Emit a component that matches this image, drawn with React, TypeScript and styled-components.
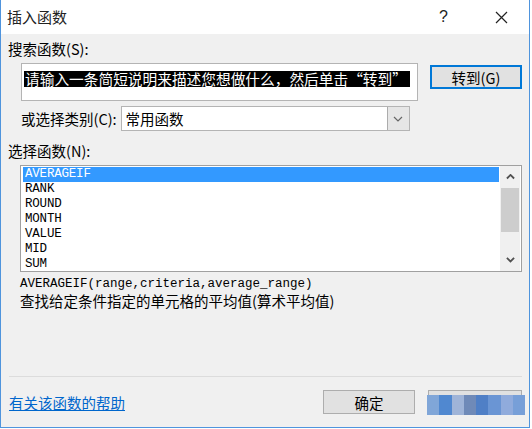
import React from "react";
import styled, { createGlobalStyle } from "styled-components";

const Global = createGlobalStyle`
  html, body { margin: 0; padding: 0; background: #ffffff; }
  body { font-family: "Noto Sans CJK SC", "Noto Sans", sans-serif; }
  * { box-sizing: border-box; }
`;

const CJK = `"Noto Sans CJK SC", "Noto Sans", sans-serif`;
const MONO = `"Liberation Mono", "DejaVu Sans Mono", monospace`;

const Dialog = styled.div`
  width: 530px;
  height: 428px;
  border: 1px solid #4f94dd;
  border-top: none;
  display: flex;
  flex-direction: column;
  background: #f0f0f0;
`;

const TitleBar = styled.div`
  height: 34px;
  background: #ffffff;
  display: flex;
  align-items: center;
  padding-left: 6px;
  padding-right: 21px;
`;

const Title = styled.div`
  font-family: ${CJK};
  font-size: 15px;
  line-height: 20px;
  color: #222;
  flex: 1;
`;

const HelpMark = styled.div`
  font-family: "Liberation Sans", sans-serif;
  font-size: 16px;
  color: #222;
  width: 12px;
  margin-right: 44px;
`;

const Content = styled.div`
  flex: 1;
  display: flex;
  flex-direction: column;
  padding: 6px 7px 0 7px;
`;

const Label = styled.div`
  font-family: ${CJK};
  font-size: 14.5px;
  line-height: 17px;
  color: #000;
  white-space: nowrap;
`;

const SearchRow = styled.div`
  display: flex;
  align-items: flex-start;
  margin-top: 6px;
  padding-left: 13px;
  gap: 12px;
`;

const SearchBox = styled.div`
  width: 397px;
  height: 38px;
  background: #fff;
  border: 1px solid #b4b4b4;
  padding: 2px 2px;
`;

const Selected = styled.span`
  display: inline-block;
  background: #000;
  color: #fff;
  font-family: ${CJK};
  font-size: 14.7px;
  line-height: 16px;
  white-space: nowrap;
  padding: 0 3px 0 1px;
`;

const Button = styled.div<{ $primary?: boolean; $w: number }>`
  width: ${(p) => p.$w}px;
  height: 24px;
  background: #e1e1e1;
  border: ${(p) => (p.$primary ? "2px solid #0078d7" : "1px solid #adadad")};
  display: flex;
  align-items: center;
  justify-content: center;
  font-family: ${CJK};
  font-size: 14.5px;
  color: #000;
  position: relative;
`;

const GoButton = styled(Button)`
  margin-top: 2px;
`;

const CategoryRow = styled.div`
  display: flex;
  align-items: center;
  margin-top: 5px;
  padding-left: 13px;
  gap: 4px;
`;

const Select = styled.div`
  width: 289px;
  height: 25px;
  background: #fff;
  border: 1px solid #b4b4b4;
  display: flex;
  align-items: center;
`;

const SelectText = styled.div`
  flex: 1;
  padding-left: 4px;
  font-family: ${CJK};
  font-size: 14.5px;
  line-height: 17px;
  color: #000;
`;

const SelectButton = styled.div`
  width: 22px;
  height: 23px;
  background: #e6e6e6;
  border-left: 1px solid #acacac;
  display: flex;
  align-items: center;
  justify-content: center;
`;

const ListLabel = styled(Label)`
  margin-top: 11px;
`;

const ListBox = styled.div`
  margin-top: 6px;
  margin-left: 12px;
  width: 502px;
  height: 107px;
  background: #fff;
  border: 1px solid #a0a0a0;
  display: flex;
  padding: 0 1px 0 2px;
  overflow: hidden;
`;

const Items = styled.div`
  flex: 1;
  display: flex;
  flex-direction: column;
  padding-top: 1px;
`;

const Item = styled.div<{ $sel?: boolean }>`
  flex: 0 0 15px;
  line-height: 15px;
  padding-left: 2px;
  font-family: ${MONO};
  font-size: 12.5px;
  letter-spacing: -0.2px;
  background: ${(p) => (p.$sel ? "#3399ff" : "transparent")};
  color: ${(p) => (p.$sel ? "#fff" : "#000")};
  margin-right: 1px;
`;

const ScrollBar = styled.div`
  width: 20px;
  background: #f0f0f0;
  display: flex;
  flex-direction: column;
  align-items: center;
`;

const Arrow = styled.div`
  flex: 0 0 22px;
  width: 20px;
  display: flex;
  align-items: center;
  justify-content: center;
`;

const Thumb = styled.div`
  width: 18px;
  height: 44px;
  background: #cdcdcd;
`;

const Track = styled.div`
  flex: 1;
`;

const Syntax = styled.div`
  margin-top: 5px;
  margin-left: 12px;
  font-family: ${MONO};
  font-size: 12.5px;
  line-height: 15px;
  color: #000;
`;

const Desc = styled(Label)`
  margin-left: 12px;
`;

const Spacer = styled.div`
  flex: 1;
`;

const Separator = styled.div`
  height: 1px;
  background: #dcdcdc;
  margin: 0 0 0 1px;
`;

const Footer = styled.div`
  height: 50px;
  display: flex;
  align-items: center;
  padding-left: 1px;
  gap: 13px;
`;

const HelpLink = styled.a`
  font-family: ${CJK};
  font-size: 14.5px;
  color: #0066cc;
  text-decoration: underline;
  flex: 1;
`;

const Mosaic = styled.div`
  position: absolute;
  left: -2px;
  right: -4px;
  top: 4px;
  bottom: -2px;
  display: flex;
`;

const Tile = styled.div<{ $c: string }>`
  flex: 1;
  background: ${(p) => p.$c};
`;

const mosaicColors = ["#80a6d8", "#5088d0", "#9fb4d8", "#6f8ab8", "#4f7fc6", "#6a95d4", "#90abdc", "#779fd8"];

const Chevron = ({ w = 10, color = "#555", up = false, sw = 1.4 }: { w?: number; color?: string; up?: boolean; sw?: number }) => (
  <svg width={w} height={w * 0.6} viewBox="0 0 10 6">
    <polyline
      points={up ? "1,5 5,1 9,5" : "1,1 5,5 9,1"}
      fill="none"
      stroke={color}
      strokeWidth={sw}
    />
  </svg>
);

const items = ["AVERAGEIF", "RANK", "ROUND", "MONTH", "VALUE", "MID", "SUM"];

export default function App() {
  return (
    <>
      <Global />
      <Dialog>
        <TitleBar>
          <Title>插入函数</Title>
          <HelpMark>?</HelpMark>
          <svg width="13" height="13" viewBox="0 0 13 13">
            <path d="M1 1 L12 12 M12 1 L1 12" stroke="#222" strokeWidth="1.2" />
          </svg>
        </TitleBar>
        <Content>
          <Label>搜索函数(S):</Label>
          <SearchRow>
            <SearchBox>
              <Selected>请输入一条简短说明来描述您想做什么，然后单击“转到”</Selected>
            </SearchBox>
            <GoButton $primary $w={92}>转到(G)</GoButton>
          </SearchRow>
          <CategoryRow>
            <Label>或选择类别(C):</Label>
            <Select>
              <SelectText>常用函数</SelectText>
              <SelectButton>
                <Chevron w={10} color="#666" sw={1.2} />
              </SelectButton>
            </Select>
          </CategoryRow>
          <ListLabel>选择函数(N):</ListLabel>
          <ListBox>
            <Items>
              {items.map((it, i) => (
                <Item key={it} $sel={i === 0}>
                  {it}
                </Item>
              ))}
            </Items>
            <ScrollBar>
              <Arrow>
                <Chevron w={9} color="#505050" up sw={2} />
              </Arrow>
              <Thumb />
              <Track />
              <Arrow>
                <Chevron w={9} color="#505050" sw={2} />
              </Arrow>
            </ScrollBar>
          </ListBox>
          <Syntax>AVERAGEIF(range,criteria,average_range)</Syntax>
          <Desc>查找给定条件指定的单元格的平均值(算术平均值)</Desc>
          <Spacer />
          <Separator />
          <Footer>
            <HelpLink>有关该函数的帮助</HelpLink>
            <Button $w={92}>确定</Button>
            <Button $w={94}>
              <Mosaic>
                {mosaicColors.map((c, i) => (
                  <Tile key={i} $c={c} />
                ))}
              </Mosaic>
            </Button>
          </Footer>
        </Content>
      </Dialog>
    </>
  );
}
